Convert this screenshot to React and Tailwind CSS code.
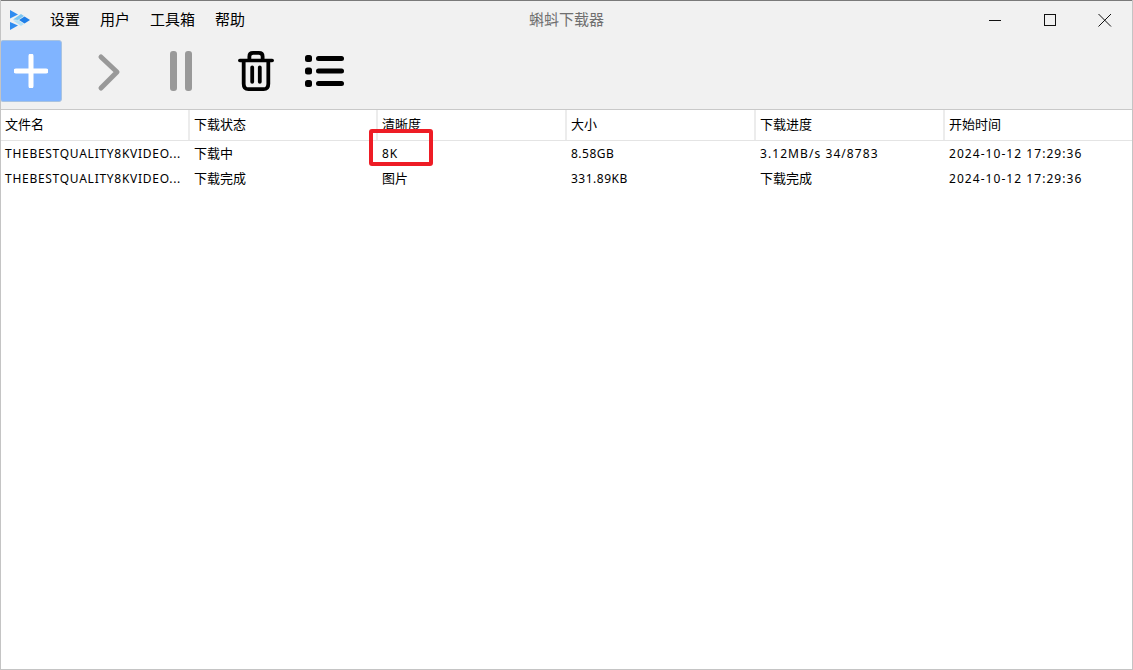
const cols = [189, 188, 189, 189, 189, 189];
const FONT = "font-['Microsoft_YaHei','Noto_Sans_CJK_SC','Noto_Sans',sans-serif]";
const LATIN = "font-['Noto_Sans',sans-serif] text-[12px] pt-[2px]";

function Logo() {
  return (
    <svg width="22" height="22" viewBox="0 0 22 22">
      <path d="M1 1 L9 5.5 L1 9.5 Z" fill="#2f8cf0" />
      <path d="M1 21 L9 16.5 L1 13 Z" fill="#2f8cf0" />
      <path d="M4 10.5 L12 5 L15 7 L9 11 Z" fill="#7cc6f2" />
      <path d="M4 11.5 L12 17 L15 15 L9 11 Z" fill="#b5e2f7" />
      <path d="M10 11 L15.5 7.5 L21 11 L15.5 14.5 Z" fill="#1f7fe8" />
    </svg>
  );
}

function Row({ cells, first }) {
  const spacing = [
    `${LATIN} tracking-[0.72px]`,
    "",
    first ? `${LATIN} tracking-[0.8px]` : "",
    `${LATIN} tracking-[0.5px]`,
    first ? `${LATIN} tracking-[1.07px]` : "",
    `${LATIN} tracking-[1.05px]`,
  ];
  return (
    <div className={`flex h-[25px] items-center text-[13px] text-black ${first ? "-mt-px" : ""}`}>
      {cells.map((c, i) => (
        <div key={i} style={{ width: cols[i] }} className={`shrink-0 pl-[4px] whitespace-nowrap ${spacing[i]}`}>
          {c}
        </div>
      ))}
    </div>
  );
}

export default function App() {
  return (
    <div className={`${FONT} relative flex h-[670px] w-[1133px] flex-col overflow-hidden border-x border-b border-[#c4c4c4] border-t-0 bg-white`}>
      <div className="h-px bg-[#7a7a7a] -mx-px" />
      <div className="flex h-[39px] items-center bg-[#f1f1f1] pb-[2px]">
        <div className="ml-[8px] w-[41px]"><Logo /></div>
        <div className="flex text-[15px] text-black">
          <span className="w-[50px]">设置</span>
          <span className="w-[50px]">用户</span>
          <span className="w-[65px]">工具箱</span>
          <span>帮助</span>
        </div>
        <div className="ml-[284px] text-[15px] text-[#6f6f6f] whitespace-nowrap">蝌蚪下载器</div>
        <div className="ml-auto mr-[19px] flex items-center gap-[39px]">
          <svg width="16" height="16" viewBox="0 0 16 16"><path d="M2 8.5H14" stroke="#111" strokeWidth="1" /></svg>
          <svg width="16" height="16" viewBox="0 0 16 16"><rect x="2.5" y="2.5" width="11" height="11" fill="none" stroke="#111" /></svg>
          <svg width="16" height="16" viewBox="0 0 16 16"><path d="M1.5 2L14 14.5M14 2L1.5 14.5" stroke="#111" strokeWidth="1" fill="none" /></svg>
        </div>
      </div>
      <div className="flex h-[70px] items-start border-b border-[#c9c9c9] bg-[#f1f1f1]">
        <div className="-ml-px flex h-[62px] w-[62px] items-center justify-center rounded-[3px] border border-[#a9c3e0] bg-[#80b4ff]">
          <svg width="34" height="34" viewBox="0 0 34 34"><path d="M17 2V32M2 17H32" stroke="#fff" strokeWidth="5" strokeLinecap="round" /></svg>
        </div>
        <div className="ml-[33px] mt-[12px]">
          <svg width="28" height="40" viewBox="0 0 28 40"><path d="M6 5L22 20L6 36" fill="none" stroke="#999" strokeWidth="5" strokeLinecap="round" strokeLinejoin="round" /></svg>
        </div>
        <div className="ml-[47px] mt-[11px] flex gap-[8px]">
          <div className="h-[40px] w-[7px] rounded-[3px] bg-[#999]" />
          <div className="h-[40px] w-[7px] rounded-[3px] bg-[#999]" />
        </div>
        <div className="ml-[46px] mt-[11px]">
          <svg width="36" height="40" viewBox="0 0 38 44" preserveAspectRatio="none" fill="none" stroke="#000" strokeWidth="4" strokeLinejoin="round" strokeLinecap="round">
            <path d="M2 10.5H36" />
            <path d="M12 10V6C12 3 14 2 16 2H22C24 2 26 3 26 6V10" />
            <path d="M6 11V36C6 40 8 42 11 42H27C30 42 32 40 32 36V11" />
            <path d="M15 18V34M23 18V34" />
          </svg>
        </div>
        <div className="ml-[31px] mt-[15px]">
          <svg width="39" height="32" viewBox="0 0 39 32" fill="#000">
            <rect x="0" y="0" width="7" height="7" rx="2.5" /><rect x="0" y="12.5" width="7" height="7" rx="2.5" /><rect x="0" y="25" width="7" height="7" rx="2.5" />
            <rect x="11" y="1" width="28" height="5" rx="2.5" />
            <rect x="11" y="13.5" width="28" height="5" rx="2.5" />
            <rect x="11" y="26" width="28" height="5" rx="2.5" />
          </svg>
        </div>
      </div>
      <div className="flex h-[31px] items-center border-b border-[#e4e4e4] text-[13px] text-black">
        {["文件名", "下载状态", "清晰度", "大小", "下载进度", "开始时间"].map((h, i) => (
          <div key={h} style={{ width: cols[i] }} className={`flex h-full shrink-0 items-center pb-[2px] pl-[4px] ${i < 5 ? "border-r-2 border-[#ececec]" : ""}`}>
            {h}
          </div>
        ))}
      </div>
      <Row first cells={["THEBESTQUALITY8KVIDEO...", "下载中", "8K", "8.58GB", "3.12MB/s 34/8783", "2024-10-12 17:29:36"]} />
      <Row cells={["THEBESTQUALITY8KVIDEO...", "下载完成", "图片", "331.89KB", "下载完成", "2024-10-12 17:29:36"]} />
      <div className="absolute left-[368px] top-[129px] h-[37px] w-[64px] rounded-[3px] border-[4px] border-[#ee1c25]" />
    </div>
  );
}
